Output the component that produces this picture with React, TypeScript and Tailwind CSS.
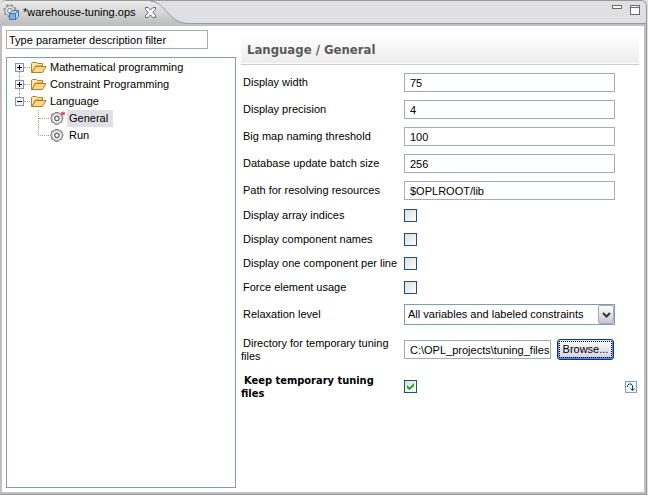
import { useState } from "react";
import type { ReactNode } from "react";

function EditorIcon() {
  return (
    <svg width="18" height="18" viewBox="0 0 18 18" className="shrink-0" aria-hidden="true">
      <circle cx="7" cy="6.8" r="5" fill="#ececec" stroke="#8b8b8b" />
      <circle cx="7" cy="6.8" r="6" fill="none" stroke="#8f8f8f" strokeWidth="1.4" strokeDasharray="2.3 2.4" />
      <circle cx="7" cy="6.8" r="2.6" fill="#dcdcdc" stroke="#8b8b8b" />
      <path d="M6.5 9.5 L9.5 6.5 H15.5 V12.5 L12.5 15.5 H6.5 Z" fill="#b9d5f3" stroke="#3f74b5" />
      <path d="M6.5 9.5 H12.5 V15.5 M12.5 9.5 L15.5 6.5" fill="none" stroke="#3f74b5" />
      <rect x="7" y="10" width="5" height="5" fill="#85aede" />
    </svg>
  );
}

function CloseIcon() {
  return (
    <svg width="11" height="11" viewBox="0 0 11 11" aria-hidden="true">
      <path
        d="M.5 .5 H3 L5.5 3 L8 .5 H10.5 V2.5 L7.7 5.5 L10.5 8.5 V10.5 H8 L5.5 8 L3 10.5 H.5 V8.5 L3.3 5.5 L.5 2.5 Z"
        fill="#fff"
        stroke="#6b6b68"
      />
    </svg>
  );
}

function FolderIcon() {
  return (
    <svg width="16" height="13" viewBox="0 0 16 13" className="shrink-0" aria-hidden="true">
      <path d="M.5 11.5 V2.5 L1.5 1.5 H5.5 L6.5 2.5 H11.5 V5 H4.5 L1 11.5 Z" fill="#fbe7a9" stroke="#b37e25" />
      <path d="M1 11.5 L4.5 5.5 H15 L11.5 11.5 Z" fill="#fad88c" stroke="#b37e25" />
    </svg>
  );
}

function GearIcon({ modified = false }: { modified?: boolean }) {
  return (
    <svg width="16" height="15" viewBox="0 0 16 15" className="shrink-0" aria-hidden="true">
      <path
        d="M5 1.5 H8.5 L9.5 2.8 L11.7 3 L12.2 5.5 L13.2 7 L12.2 9 L11.7 11.2 L9.5 11.7 L8.3 13.3 H5 L4 11.7 L1.8 11.2 L1.5 9 L.6 7.3 L1.5 5.3 L1.8 3 L4 2.8 Z"
        fill="#c9c9c9"
        stroke="#7d7d7d"
      />
      <circle cx="6.9" cy="7.4" r="4" fill="#fff" />
      <circle cx="6.9" cy="7.4" r="2.2" fill="#f4f4f4" stroke="#666" strokeWidth="1.2" />
      {modified && (
        <path d="M13 .5 V4.5 M11 1.5 L15 3.5 M15 1.5 L11 3.5" stroke="#ee1c3c" strokeWidth="1" fill="none" />
      )}
    </svg>
  );
}

function Expander({ open }: { open: boolean }) {
  return (
    <svg width="9" height="9" viewBox="0 0 9 9" className="shrink-0" shapeRendering="crispEdges" aria-hidden="true">
      <rect x=".5" y=".5" width="8" height="8" fill="#f3f2f2" stroke="#8296ae" />
      <path d={open ? "M2 4.5 H7" : "M2 4.5 H7 M4.5 2 V7"} stroke="#000" />
    </svg>
  );
}

function Branch({
  label,
  open,
  first,
  children,
}: {
  label: string;
  open: boolean;
  first?: boolean;
  children?: ReactNode;
}) {
  return (
    <li role="treeitem" aria-expanded={open} aria-selected={false}>
      <button type="button" className="flex h-[17px] items-center">
        <span className="flex h-[17px] w-[9px] flex-col items-center">
          <span className={`h-1 border-l border-dotted ${first ? "border-transparent" : "border-[#a9a595]"}`} />
          <Expander open={open} />
          <span className={`h-1 border-l border-dotted ${open ? "border-transparent" : "border-[#a9a595]"}`} />
        </span>
        <span className="mr-px w-[6px] border-t border-dotted border-[#a9a595]" />
        <FolderIcon />
        <span className="ml-[3px]">{label}</span>
      </button>
      {children}
    </li>
  );
}

function Leaf({ label, selected, last }: { label: string; selected?: boolean; last?: boolean }) {
  return (
    <li role="treeitem" aria-selected={!!selected} className="flex">
      <span
        className={`w-[11px] border-l border-dotted border-[#a9a595] ${last ? "h-[9px] border-b" : "h-[17px]"}`}
      >
        {!last && <span className="block h-[9px] border-b border-dotted border-[#a9a595]" />}
      </span>
      <button type="button" className="ml-px flex h-[17px] items-center">
        <GearIcon modified={selected} />
        <span className={`ml-px flex h-[17px] items-center pr-[5px] pl-[2px] ${selected ? "bg-[#e0dfe3]" : ""}`}>
          {label}
        </span>
      </button>
    </li>
  );
}

function Row({
  id,
  label,
  className,
  changed,
  extra,
  children,
}: {
  id: string;
  label: string;
  className: string;
  changed?: boolean;
  extra?: ReactNode;
  children: ReactNode;
}) {
  return (
    <div className={`grid grid-cols-[163px_minmax(0,1fr)_24px] items-center ${className}`}>
      <label
        htmlFor={id}
        className={`pr-[6px] leading-[13px] ${
          changed ? "indent-[3px] font-['DejaVu_Sans_Condensed',sans-serif] font-bold" : "indent-[2px]"
        }`}
      >
        {label}
      </label>
      {children}
      {extra}
    </div>
  );
}

function CheckBox({ id, initial = false }: { id: string; initial?: boolean }) {
  const [on, setOn] = useState(initial);
  return (
    <span className="grid size-[13px] place-items-center">
      <input
        id={id}
        type="checkbox"
        checked={on}
        onChange={(e) => setOn(e.target.checked)}
        className="col-start-1 row-start-1 size-[13px] appearance-none border border-[#1c5180] bg-linear-to-br from-[#dcdcd7] to-white"
      />
      {on && (
        <svg width="7" height="7" viewBox="0 0 7 7" className="pointer-events-none col-start-1 row-start-1" aria-hidden="true">
          <path d="M0 2 L2.5 4.5 L7 0 V3 L2.5 7 L0 5 Z" fill="#21a121" />
        </svg>
      )}
    </span>
  );
}

const fieldClass = "h-[19px] w-full min-w-0 border border-[#a5acb2] bg-white pl-[5px] outline-none";

const textFields = [
  { id: "width", label: "Display width", value: "75" },
  { id: "precision", label: "Display precision", value: "4" },
  { id: "threshold", label: "Big map naming threshold", value: "100" },
  { id: "batch", label: "Database update batch size", value: "256" },
  { id: "path", label: "Path for resolving resources", value: "$OPLROOT/lib" },
];

const flags = [
  { id: "indices", label: "Display array indices" },
  { id: "names", label: "Display component names" },
  { id: "perline", label: "Display one component per line" },
  { id: "usage", label: "Force element usage" },
];

export default function App() {
  return (
    <div className="flex min-h-screen flex-col bg-[#e0dfe3] pr-px font-['Liberation_Sans',sans-serif] text-[11px] leading-[13px] text-black">
      <div className="flex flex-1 flex-col overflow-hidden rounded-t-[6px] border-t border-r border-b border-[#99989d] bg-[#bfbfbf]">
        <header className="flex h-[23px] border-b border-[#99989d] bg-[#e0dfe3]">
          <div className="flex h-[23px] w-[145px] shrink-0 items-center bg-linear-to-b from-[#ececec] to-[#bfbfbf] pl-[3px]">
            <EditorIcon />
            <span className="ml-[2px] flex-1 whitespace-nowrap">*warehouse-tuning.ops</span>
          </div>
          <svg width="43" height="23" viewBox="0 0 43 23" className="shrink-0" aria-hidden="true">
            <defs>
              <linearGradient id="tab" x1="0" y1="0" x2="0" y2="1">
                <stop offset="0" stopColor="#ececec" />
                <stop offset="1" stopColor="#bfbfbf" />
              </linearGradient>
            </defs>
            <path d="M0 0 H5 C14 1 18 7 23 12 C28 17 32 22 43 22.5 V23 H0 Z" fill="url(#tab)" />
            <path d="M5 0 C14 1 18 7 23 12 C28 17 32 22 43 22.5" fill="none" stroke="#99989d" />
          </svg>
          <button type="button" aria-label="Close" className="-ml-[43px] flex h-[22px] items-center">
            <CloseIcon />
          </button>
          <div className="ml-auto flex gap-2 pt-1 pr-[6px]">
            <button type="button" aria-label="Minimize" className="h-1 w-[10px] border border-[#6d6b62] bg-white" />
            <button
              type="button"
              aria-label="Maximize"
              className="flex h-[10px] w-[10px] flex-col border border-[#6d6b62] bg-white"
            >
              <span className="h-[2px] w-full border-b border-[#6d6b62]" />
            </button>
          </div>
        </header>

        <main className="m-[2px] flex flex-1 bg-white py-1 pr-[5px] pl-1">
          <aside className="flex w-[230px] shrink-0 flex-col">
            <input
              type="text"
              aria-label="Parameter filter"
              defaultValue="Type parameter description filter"
              className="h-[19px] w-[202px] border border-[#a5acb2] px-[2px] outline-none"
            />
            <ul role="tree" aria-label="Parameters" className="mt-2 flex-1 border border-[#7f9db9] pt-px pl-2">
              <Branch label="Mathematical programming" open={false} first />
              <Branch label="Constraint Programming" open={false} />
              <Branch label="Language" open>
                <ul role="group" className="pl-[23px]">
                  <Leaf label="General" selected />
                  <Leaf label="Run" last />
                </ul>
              </Branch>
            </ul>
          </aside>

          <section className="ml-[5px] min-w-0 flex-1 pt-[6px]">
            <h1 className="flex h-[27px] items-center bg-linear-to-b from-white to-[#ececec] pl-[6px] font-['DejaVu_Sans_Condensed',sans-serif] text-[13px] font-bold text-[#5a5a5a]">
              Language / General
            </h1>
            <div className="mt-px border-t border-[#cccccc]" />
            <form className="pt-2" onSubmit={(e) => e.preventDefault()}>
              <div className="flex flex-col gap-2">
                {textFields.map((f) => (
                  <Row key={f.id} id={f.id} label={f.label} className="h-[19px]">
                    <input id={f.id} type="text" defaultValue={f.value} className={fieldClass} />
                  </Row>
                ))}
              </div>
              <div className="mt-[9px] flex flex-col gap-[11px]">
                {flags.map((f) => (
                  <Row key={f.id} id={f.id} label={f.label} className="h-[13px]">
                    <CheckBox id={f.id} />
                  </Row>
                ))}
              </div>
              <Row id="relax" label="Relaxation level" className="mt-[10px] h-[21px]">
                <div className="relative">
                  <select
                    id="relax"
                    className="block h-[21px] w-full appearance-none border border-[#7f9db9] bg-white pr-5 pl-[3px] outline-none"
                  >
                    <option>All variables and labeled constraints</option>
                  </select>
                  <span className="pointer-events-none absolute inset-y-px right-px flex w-4 items-center justify-center rounded-[2px] border border-[#a9a8b4] bg-linear-to-b from-white to-[#c6c5d2]">
                    <svg width="9" height="6" viewBox="0 0 9 6" aria-hidden="true">
                      <path d="M1 1 L4.5 4.5 L8 1" fill="none" stroke="#333" strokeWidth="2" />
                    </svg>
                  </span>
                </div>
              </Row>
              <Row id="dir" label="Directory for temporary tuning files" className="mt-[11px] h-[27px]">
                <div className="flex items-center gap-[6px]">
                  <input id="dir" type="text" defaultValue="C:\OPL_projects\tuning_files" className={fieldClass} />
                  <button
                    type="button"
                    className="mr-px flex h-[21px] w-[57px] shrink-0 rounded-[3px] border border-[#003c74] bg-linear-to-b from-white to-[#cfcedd] p-px shadow-[inset_0_-1px_0_1px_#6982ee,inset_0_1px_0_#cee7ff]"
                  >
                    <span className="flex flex-1 items-center justify-center border border-dotted border-black">
                      Browse...
                    </span>
                  </button>
                </div>
              </Row>
              <Row
                id="keep"
                label="Keep temporary tuning files"
                changed
                className="mt-[10px] h-[27px]"
                extra={
                  <button type="button" aria-label="Reset to default" className="mr-[2px] size-3 justify-self-end">
                    <svg width="12" height="12" viewBox="0 0 12 12" aria-hidden="true">
                      <rect x=".5" y=".5" width="11" height="11" fill="#e9f4fc" stroke="#8aa0b8" />
                      <path d="M2.5 6 V4.5 L4 3 H6 L7.5 4.5 V9 M5.5 7.5 L7.5 9.5 L9.5 7.5" fill="none" stroke="#173f66" />
                    </svg>
                  </button>
                }
              >
                <CheckBox id="keep" initial />
              </Row>
            </form>
          </section>
        </main>
      </div>
    </div>
  );
}
